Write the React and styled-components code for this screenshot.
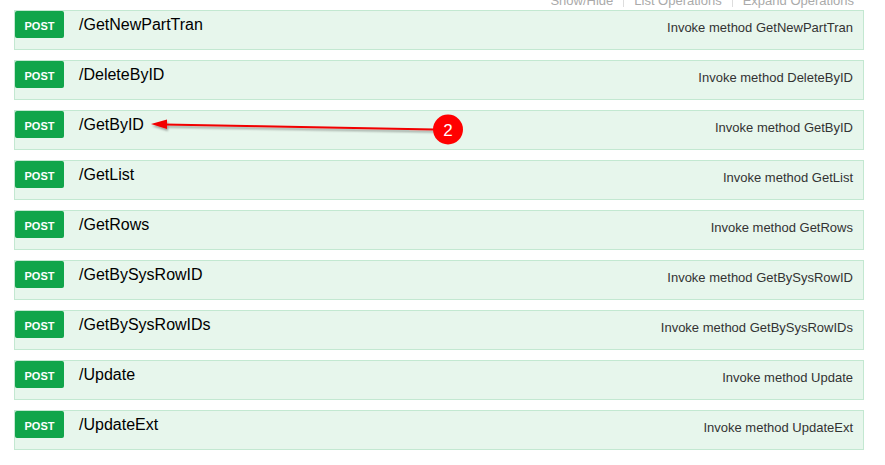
import React from "react";
import styled, { createGlobalStyle } from "styled-components";

const GlobalStyle = createGlobalStyle`
  html, body {
    margin: 0;
    padding: 0;
    background: #ffffff;
    overflow: hidden;
  }
  body {
    font-family: "Liberation Sans", Arial, sans-serif;
  }
`;

const Page = styled.div`
  position: relative;
  width: 885px;
  height: 465px;
  box-sizing: border-box;
  padding: 0 21px 0 14px;
  display: flex;
  flex-direction: column;
  gap: 10px;
`;

const Header = styled.ul`
  list-style: none;
  margin: 0 0 -7px 0;
  padding: 0 10px 0 0;
  height: 7px;
  display: flex;
  justify-content: flex-end;
  align-items: flex-end;
  font-size: 13px;
  line-height: 13px;
  color: #aaaaaa;
`;

const HeaderItem = styled.li`
  padding: 0 10px;
  border-right: ${(p) => (p.last ? "none" : "1px solid #dddddd")};
  padding-right: ${(p) => (p.last ? "0" : "10px")};
  white-space: nowrap;
`;

const Operation = styled.div`
  height: 40px;
  box-sizing: border-box;
  background: #e7f6ec;
  border: 1px solid #c3e8d1;
  display: flex;
  align-items: flex-start;
`;

const Method = styled.span`
  width: 49px;
  height: 27px;
  flex: none;
  background: #10a54a;
  color: #ffffff;
  border-radius: 2px;
  font-size: 11px;
  font-weight: bold;
  display: flex;
  align-items: center;
  justify-content: center;
  padding-top: 2px;
  box-sizing: border-box;
`;

const Path = styled.span`
  margin-left: 15px;
  font-size: 16px;
  line-height: 16px;
  padding-top: 6px;
  color: #000000;
  flex: 1;
`;

const Summary = styled.span`
  margin-right: 10px;
  font-size: 13px;
  line-height: 13px;
  padding-top: 10px;
  color: #333333;
`;

const Annotation = styled.svg`
  position: absolute;
  left: 0;
  top: 0;
  pointer-events: none;
`;

const ops = [
  "GetNewPartTran",
  "DeleteByID",
  "GetByID",
  "GetList",
  "GetRows",
  "GetBySysRowID",
  "GetBySysRowIDs",
  "Update",
  "UpdateExt",
];

export default function App() {
  return (
    <>
      <GlobalStyle />
      <Page>
        <Header>
          <HeaderItem>Show/Hide</HeaderItem>
          <HeaderItem>List Operations</HeaderItem>
          <HeaderItem last>Expand Operations</HeaderItem>
        </Header>
        {ops.map((op) => (
          <Operation key={op}>
            <Method>POST</Method>
            <Path>/{op}</Path>
            <Summary>Invoke method {op}</Summary>
          </Operation>
        ))}
        <Annotation width="885" height="465" viewBox="0 0 885 465">
          <defs>
            <filter id="sh" x="-10%" y="-50%" width="120%" height="300%">
              <feDropShadow dx="1" dy="2" stdDeviation="1.2" floodColor="#000" floodOpacity="0.35" />
            </filter>
          </defs>
          <g filter="url(#sh)">
            <line x1="434" y1="129.5" x2="164" y2="124.5" stroke="#f20000" strokeWidth="2" />
            <polygon points="151,124 167,119.5 167,129" fill="#f20000" />
          </g>
          <circle cx="448" cy="129.5" r="15" fill="#ff0000" />
          <text
            x="448"
            y="135.5"
            textAnchor="middle"
            fontSize="17"
            fontFamily="Liberation Sans, Arial, sans-serif"
            fill="#ffffff"
          >
            2
          </text>
        </Annotation>
      </Page>
    </>
  );
}
